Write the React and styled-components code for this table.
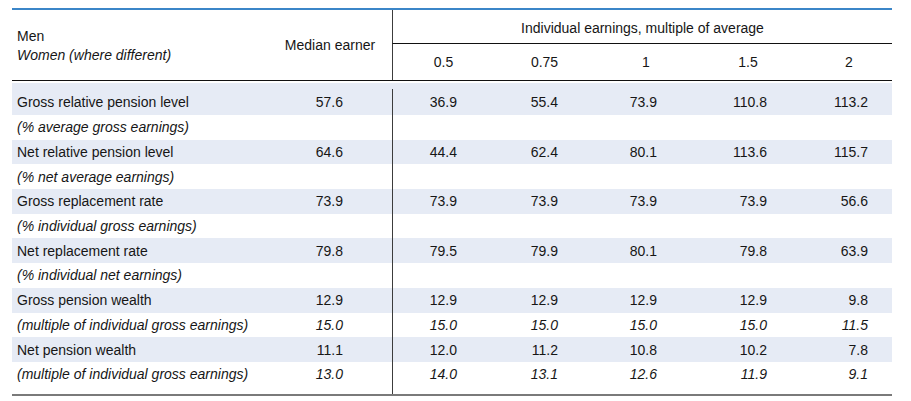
import React from 'react'
import styled, { createGlobalStyle } from 'styled-components'

const GlobalStyle = createGlobalStyle`
  html, body {
    margin: 0;
    padding: 0;
    background: #fff;
  }
  body {
    font-family: "Liberation Sans Narrow", "Liberation Sans", Arial, sans-serif;
    color: #161616;
  }
`

const COLS = '256px 124px 102px 101px 102px 102px 93px'
// right padding of each value column, so the figures line up as in the print
const PADS = [49, 37, 37, 40, 32, 24]

const rows = [
  { label: 'Gross relative pension level', vals: ['57.6', '36.9', '55.4', '73.9', '110.8', '113.2'] },
  { label: '(% average gross earnings)', italic: true },
  { label: 'Net relative pension level', vals: ['64.6', '44.4', '62.4', '80.1', '113.6', '115.7'] },
  { label: '(% net average earnings)', italic: true },
  { label: 'Gross replacement rate', vals: ['73.9', '73.9', '73.9', '73.9', '73.9', '56.6'] },
  { label: '(% individual gross earnings)', italic: true },
  { label: 'Net replacement rate', vals: ['79.8', '79.5', '79.9', '80.1', '79.8', '63.9'] },
  { label: '(% individual net earnings)', italic: true },
  { label: 'Gross pension wealth', vals: ['12.9', '12.9', '12.9', '12.9', '12.9', '9.8'] },
  { label: '(multiple of individual gross earnings)', italic: true, vals: ['15.0', '15.0', '15.0', '15.0', '15.0', '11.5'] },
  { label: 'Net pension wealth', vals: ['11.1', '12.0', '11.2', '10.8', '10.2', '7.8'] },
  { label: '(multiple of individual gross earnings)', italic: true, vals: ['13.0', '14.0', '13.1', '12.6', '11.9', '9.1'] },
]

const multiples = ['0.5', '0.75', '1', '1.5', '2']

const App = () => {
  return (
    <>
      <GlobalStyle />
      <Page>
        <Table>
          <Header>
            <LeftHead>
              <span>Men</span>
              <em>Women (where different)</em>
            </LeftHead>
            <MedianHead>Median earner</MedianHead>
            <GroupHead>Individual earnings, multiple of average</GroupHead>
            {multiples.map((m, i) => (
              <SubHead key={m} $first={i === 0} $last={i === multiples.length - 1}>{m}</SubHead>
            ))}
          </Header>

          <Body>
            {rows.map((r, i) => (
              <Row key={i} $shaded={i % 2 === 0} $first={i === 0}>
                <Label $italic={r.italic}>{r.label}</Label>
                {PADS.map((pad, j) => (
                  <Num key={j} $italic={r.italic} $pad={pad} $divider={j === 1}>
                    {r.vals ? r.vals[j] : ''}
                  </Num>
                ))}
              </Row>
            ))}
          </Body>
          <Foot>
            <div />
            <div />
            <FootDivider />
          </Foot>
        </Table>
      </Page>
    </>
  )
}

const Page = styled.div`
  padding: 8px 0 0 12px;
`

const Table = styled.div`
  width: 880px;
  border-top: 2px solid #3b86c8;
  font-size: 14px;
  line-height: 16px;
`

const Header = styled.div`
  display: grid;
  grid-template-columns: ${COLS};
  grid-template-rows: 34px 36px;
  border-bottom: 1px solid #111;
`

const LeftHead = styled.div`
  grid-row: 1 / 3;
  grid-column: 1;
  display: flex;
  flex-direction: column;
  justify-content: center;
  gap: 3px;
  padding-left: 5px;

  em {
    font-style: italic;
  }
`

const MedianHead = styled.div`
  grid-row: 1 / 3;
  grid-column: 2;
  display: flex;
  align-items: center;
  justify-content: center;
`

const GroupHead = styled.div`
  grid-row: 1;
  grid-column: 3 / 8;
  display: flex;
  align-items: center;
  justify-content: center;
  border-left: 1px solid #3c3c3c;
  border-bottom: 1px solid #111;
  padding-top: 2px;
`

const SubHead = styled.div`
  grid-row: 2;
  display: flex;
  align-items: center;
  justify-content: center;
  border-left: ${p => (p.$first ? '1px solid #3c3c3c' : 'none')};
  padding-left: ${p => (p.$last ? '7px' : '0')};
`

const Body = styled.div`
  padding-top: 2px;
`

const Row = styled.div`
  display: grid;
  grid-template-columns: ${COLS};
  height: ${p => (p.$first ? '32px' : '24.7px')};
  background: ${p => (p.$shaded ? '#e6ebf5' : '#fff')};
  align-items: center;
  padding-top: ${p => (p.$first ? '6px' : '0')};
  box-sizing: border-box;
`

const Label = styled.div`
  padding-left: 5px;
  font-style: ${p => (p.$italic ? 'italic' : 'normal')};
  white-space: nowrap;
`

const Num = styled.div`
  align-self: stretch;
  display: flex;
  align-items: center;
  justify-content: flex-end;
  padding-right: ${p => p.$pad}px;
  font-style: ${p => (p.$italic ? 'italic' : 'normal')};
  border-left: ${p => (p.$divider ? '1px solid #3c3c3c' : 'none')};
`

const Foot = styled.div`
  display: grid;
  grid-template-columns: ${COLS};
  height: 7px;
  border-bottom: 2px solid #7a7a7a;
`

const FootDivider = styled.div`
  border-left: 1px solid #3c3c3c;
`

export default App
